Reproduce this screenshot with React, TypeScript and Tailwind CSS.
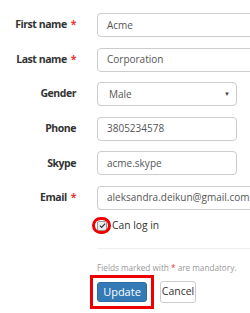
import React from "react";

const font = { fontFamily: '"Open Sans", "Liberation Sans", sans-serif' };

function Label({ text, req }: { text: string; req?: boolean }) {
  return (
    <div className="h-[24px] flex items-center justify-end pr-[21px] text-[10.5px] font-bold text-[#333] whitespace-nowrap tracking-[-0.45px]">
      <span>{text}</span>
      {req && <span className="text-[#e33] ml-[4px]">*</span>}
    </div>
  );
}

function Input({ value, wide }: { value: string; wide?: boolean }) {
  return (
    <div
      className={`h-[24px] border border-[#ccc] rounded-[4px] flex items-center pl-[9px] text-[10px] text-[#555] whitespace-nowrap ${
        wide ? "w-[180px]" : "w-[140px]"
      }`}
    >
      {value}
    </div>
  );
}

export default function App() {
  return (
    <div className="w-[250px] h-[313px] overflow-hidden bg-white relative" style={font}>
      <div className="grid grid-cols-[97px_1fr] gap-y-[10.6px] pt-[13px]">
        <Label text="First name" req />
        <Input value="Acme" wide />
        <Label text="Last name" req />
        <Input value="Corporation" wide />
        <Label text="Gender" />
        <div className="h-[24px] w-[140px] border border-[#ccc] rounded-[4px] flex items-center justify-between pl-[11px] pr-[6px] text-[10px] text-[#555]">
          <span>Male</span>
          <span className="text-[6px] text-[#444]">▼</span>
        </div>
        <Label text="Phone" />
        <Input value="3805234578" />
        <Label text="Skype" />
        <Input value="acme.skype" />
        <Label text="Email" req />
        <Input value="aleksandra.deikun@gmail.com" wide />
      </div>
      <div className="pl-[97px]">
        <div className="flex items-center h-[20px] mt-[6px] relative">
          <div className="relative w-[10px] h-[10px] mr-[5px]">
            <div className="absolute left-[-5px] top-[-4px] w-[19px] h-[17px] rounded-full border-[3px] border-[#e00]"></div>
            <div className="w-[10px] h-[10px] border border-[#999] rounded-[2px] bg-[#eee] flex items-center justify-center">
              <svg width="7" height="7" viewBox="0 0 8 8">
                <path d="M1 4.2 L3 6.2 L7 1.8" stroke="#333" strokeWidth="1.4" fill="none" />
              </svg>
            </div>
          </div>
          <span className="text-[10.3px] text-[#333]">Can log in</span>
        </div>
        <div className="mt-[12px] border-t border-[#eee]"></div>
        <div className="mt-[13px] text-[8.2px] text-[#999] whitespace-nowrap">
          Fields marked with <span className="text-[#e33]">*</span> are mandatory.
        </div>
        <div className="flex items-center mt-[1px]">
          <div className="border-[3px] border-[#e00] p-[4px] -ml-[7px]">
            <div className="h-[20px] w-[50px] bg-[#337ab7] border border-[#2e6da4] rounded-[3px] text-white text-[11px] flex items-center justify-center">
              Update
            </div>
          </div>
          <div className="ml-[6px] h-[22px] w-[36px] border border-[#ccc] rounded-[3px] text-[#333] text-[10.5px] flex items-center justify-center">
            Cancel
          </div>
        </div>
      </div>
    </div>
  );
}
